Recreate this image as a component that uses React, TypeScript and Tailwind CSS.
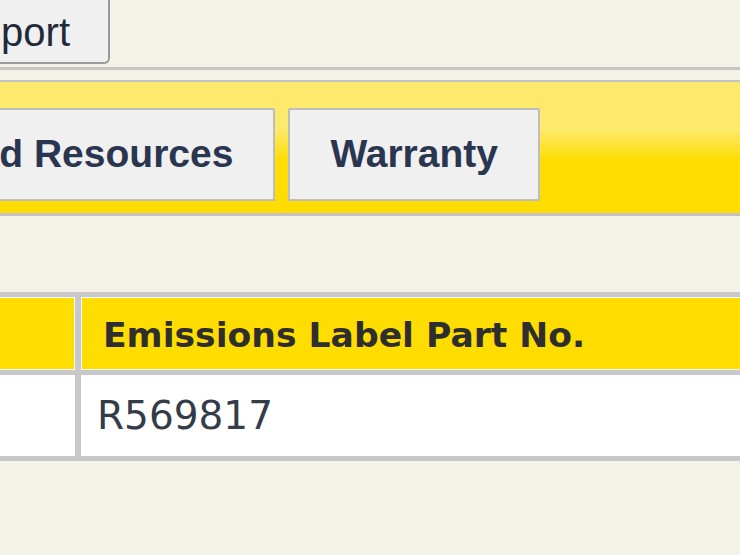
export default function App() {
  return (
    <div className="h-[555px] w-[740px] overflow-hidden bg-[#f4f1e6] font-['Liberation_Sans',Arial,sans-serif]">
      <div className="flex h-[66px] w-[110px] justify-end">
        <button className="flex h-[64px] shrink-0 items-center rounded-br-[6px] border-2 border-t-0 border-[#9a9a9a] bg-[#f0f0f0] px-[38px] pt-[2px] text-[40px] text-[#1f2a3a]">
          Support
        </button>
      </div>
      <div className="mt-[1px] h-[3px] bg-[#c6c6c6]" />
      <div className="h-[10px]" />

      <div className="border-t-2 border-b-[3px] border-[#c3c3c3] bg-[linear-gradient(to_bottom,#fdea6c_0%,#fdea6c_36%,#ffdd00_60%,#ffdd00_100%)] pt-[26px] pb-[12px]">
        <div className="flex w-[540px] justify-end gap-[13px]">
          <Tab label="Parts and Resources" />
          <Tab label="Warranty" />
        </div>
      </div>

      <div className="h-[76px]" />

      <div className="-ml-[60px] grid w-[860px] grid-cols-[135px_1fr] gap-x-[6px] gap-y-[5px] bg-[#c8c8c8] py-[5px] font-['DejaVu_Sans',Verdana,sans-serif]">
        <div className="h-[73px] border border-white bg-[#ffdd00]" />
        <div className="flex h-[73px] items-center border border-white bg-[#ffdd00] pt-[4px] pl-[21px] text-[34.6px] font-bold text-[#2e2e2e]">
          Emissions Label Part No.
        </div>
        <div className="h-[81px] bg-white" />
        <div className="flex h-[81px] items-center bg-white pt-[2px] pl-[16px] text-[39px] text-[#343c4a]">
          R569817
        </div>
      </div>
    </div>
  );
}

function Tab({ label }: { label: string }) {
  return (
    <div className="flex h-[93px] shrink-0 items-center rounded-t-[2px] border-2 border-[#bdbdbd] bg-[#f0f0f0] px-[40px] text-[39px] font-bold whitespace-nowrap text-[#2a3550]">
      {label}
    </div>
  );
}
